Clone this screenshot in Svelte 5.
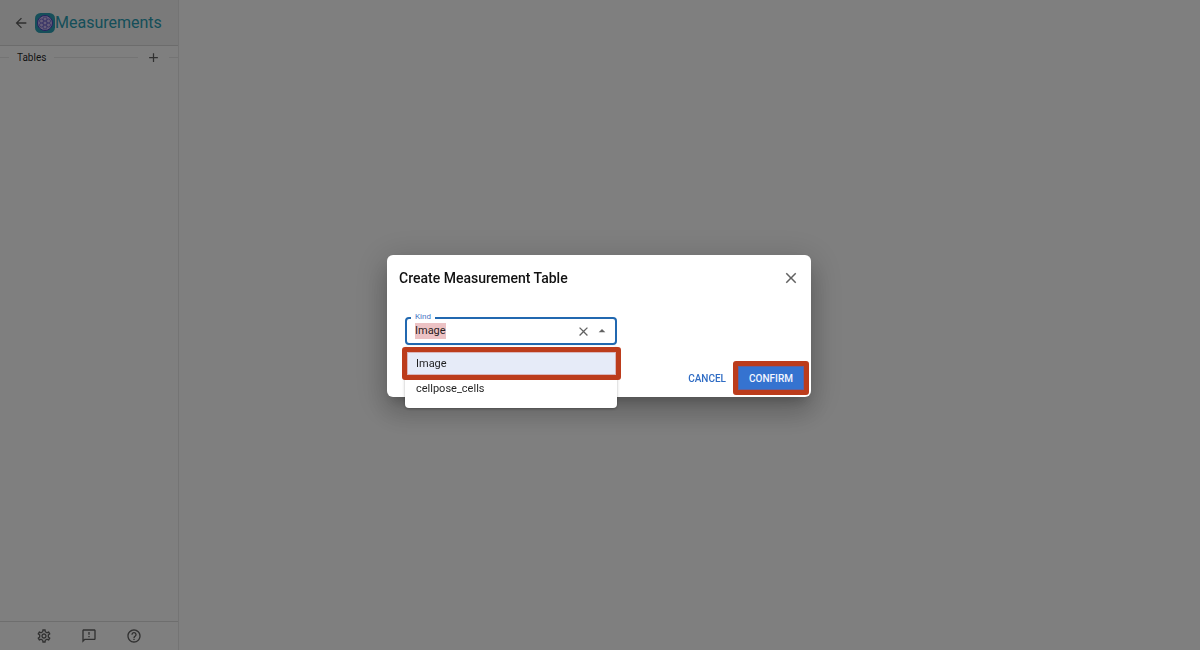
<script>
  import { onMount } from 'svelte';

  const kinds = ['Image', 'cellpose_cells'];
  let kind = $state('Image');
  let input;

  onMount(() => {
    input.focus();
    input.select();
  });
</script>

<div class="app">
  <aside class="sidebar">
    <header class="brand">
      <button class="icon-button" aria-label="Back">
        <svg width="16" height="16" viewBox="0 0 24 24"><path d="M20 11H7.830l5.590-5.590L12 4l-8 8 8 8 1.410-1.410L7.830 13H20v-2z" /></svg>
      </button>
      <svg class="logo" width="20" height="20" viewBox="0 0 40 40" aria-hidden="true">
        <rect width="40" height="40" rx="11" fill="#2c9fb4" />
        <circle cx="20" cy="20" r="15" fill="#cdbcf0" />
        <g fill="none" stroke="#7a6fd2" stroke-width="2">
          <circle cx="20" cy="20" r="15" stroke="#4c40c0" stroke-width="2" />
          <circle cx="20" cy="20" r="4" />
          <circle cx="20" cy="12" r="4" /><circle cx="20" cy="28" r="4" />
          <circle cx="13" cy="16" r="4" /><circle cx="27" cy="16" r="4" />
          <circle cx="13" cy="24" r="4" /><circle cx="27" cy="24" r="4" />
        </g>
      </svg>
      <h1>Measurements</h1>
    </header>
    <div class="section">
      <span class="rule short"></span>
      <span>Tables</span>
      <span class="rule"></span>
      <button class="icon-button" aria-label="Add table">
        <svg width="15" height="15" viewBox="0 0 24 24"><path d="M19 13h-6v6h-2v-6H5v-2h6V5h2v6h6v2z" /></svg>
      </button>
      <span class="rule short"></span>
    </div>
    <footer class="tools">
      <button class="icon-button" aria-label="Settings">
        <svg width="16" height="16" viewBox="0 0 24 24"><path d="M19.430 12.980c.04-.32.07-.64.07-.98 0-.34-.03-.66-.07-.98l2.110-1.650c.19-.15.24-.42.12-.64l-2-3.460c-.09-.16-.26-.25-.44-.25-.06 0-.12.010-.17.030l-2.490 1c-.52-.4-1.080-.73-1.690-.98l-.38-2.650C14.460 2.180 14.250 2 14 2h-4c-.25 0-.46.18-.49.42l-.38 2.650c-.61.25-1.170.59-1.690.98l-2.490-1c-.06-.02-.12-.03-.18-.03-.17 0-.34.090-.43.25l-2 3.460c-.13.22-.07.49.12.64l2.110 1.650c-.04.32-.07.65-.07.98 0 .33.030.66.070.98l-2.110 1.650c-.19.15-.24.42-.12.64l2 3.460c.09.16.26.25.44.25.06 0 .12-.01.17-.03l2.490-1c.52.4 1.080.73 1.690.98l.38 2.650c.03.24.24.42.49.42h4c.25 0 .46-.18.49-.42l.38-2.650c.61-.25 1.170-.59 1.690-.98l2.490 1c.06.020.12.030.18.030.17 0 .34-.09.43-.25l2-3.460c.12-.22.07-.49-.12-.64l-2.110-1.650zm-1.980-1.710c.04.31.05.52.05.73 0 .21-.02.43-.05.73l-.14 1.130.89.7 1.080.84-.7 1.210-1.270-.51-1.040-.42-.9.68c-.43.32-.84.56-1.250.73l-1.060.43-.16 1.130-.2 1.350h-1.400l-.19-1.350-.16-1.130-1.060-.43c-.43-.18-.83-.41-1.230-.71l-.91-.7-1.060.43-1.270.51-.7-1.210 1.080-.84.89-.7-.14-1.130c-.03-.31-.05-.54-.05-.74s.02-.43.05-.73l.14-1.130-.89-.7-1.080-.84.7-1.210 1.270.51 1.040.42.9-.68c.43-.32.84-.56 1.250-.73l1.060-.43.16-1.130.2-1.350h1.390l.19 1.350.16 1.130 1.060.43c.43.18.83.41 1.230.71l.91.7 1.060-.43 1.270-.51.7 1.210-1.070.85-.89.7.14 1.130zM12 8c-2.210 0-4 1.790-4 4s1.790 4 4 4 4-1.790 4-4-1.790-4-4-4zm0 6c-1.100 0-2-.9-2-2s.9-2 2-2 2 .9 2 2-.9 2-2 2z" /></svg>
      </button>
      <button class="icon-button" aria-label="Send feedback">
        <svg width="16" height="16" viewBox="0 0 24 24"><path d="M20 2H4c-1.100 0-2 .9-2 2v18l4-4h14c1.100 0 2-.9 2-2V4c0-1.100-.9-2-2-2zm0 14H5.170L4 17.170V4h16v12zM11 12h2v2h-2zm0-6h2v4h-2z" /></svg>
      </button>
      <button class="icon-button" aria-label="Help">
        <svg width="16" height="16" viewBox="0 0 24 24"><path d="M11 18h2v-2h-2v2zm1-16C6.480 2 2 6.480 2 12s4.480 10 10 10 10-4.480 10-10S17.520 2 12 2zm0 18c-4.410 0-8-3.590-8-8s3.590-8 8-8 8 3.590 8 8-3.590 8-8 8zm0-14c-2.210 0-4 1.790-4 4h2c0-1.100.9-2 2-2s2 .9 2 2c0 2-3 1.750-3 5h2c0-2.250 3-2.500 3-5 0-2.210-1.790-4-4-4z" /></svg>
      </button>
    </footer>
  </aside>
  <main></main>
</div>

<div class="backdrop">
  <div class="dialog" role="dialog" aria-modal="true" aria-labelledby="dialog-title">
    <div class="title-row">
      <h2 id="dialog-title">Create Measurement Table</h2>
      <button class="icon-button" aria-label="Close">
        <svg width="18" height="18" viewBox="0 0 24 24"><path d="M19 6.410L17.590 5 12 10.590 6.410 5 5 6.410 10.590 12 5 17.590 6.410 19 12 13.410 17.590 19 19 17.590 13.410 12z" /></svg>
      </button>
    </div>
    <div class="field">
      <label for="kind">Kind</label>
      <input id="kind" type="text" role="combobox" aria-expanded="true" aria-controls="kinds" autocomplete="off" spellcheck="false" bind:this={input} bind:value={kind} />
      <button class="icon-button" aria-label="Clear" onclick={() => (kind = '')}>
        <svg width="15" height="15" viewBox="0 0 24 24"><path d="M19 6.410L17.590 5 12 10.590 6.410 5 5 6.410 10.590 12 5 17.590 6.410 19 12 13.410 17.590 19 19 17.590 13.410 12z" /></svg>
      </button>
      <button class="icon-button" aria-label="Toggle options">
        <svg width="16" height="16" viewBox="0 0 24 24"><path d="M7 14l5-5 5 5z" /></svg>
      </button>
      <ul id="kinds" role="listbox">
        {#each kinds as item, i}
          <li role="option" aria-selected={i === 0} class:marked={i === 0}>{item}</li>
        {/each}
      </ul>
    </div>
    <div class="actions">
      <button class="text-button">Cancel</button>
      <button class="confirm marked">Confirm</button>
    </div>
  </div>
</div>

<style>
  :global(body) {
    font-family: Roboto, sans-serif;
    font-size: 11px;
    color: rgba(0, 0, 0, 0.87);
    background: #fff;
  }
  .app {
    display: flex;
    height: 100vh;
  }
  main {
    flex: 1;
  }
  button {
    font: inherit;
    border: 0;
    margin: 0;
    padding: 0;
    background: none;
    cursor: pointer;
  }
  .icon-button {
    display: flex;
    flex: none;
    color: rgba(0, 0, 0, 0.62);
  }
  .icon-button svg {
    fill: currentColor;
  }
  .sidebar {
    display: flex;
    flex-direction: column;
    box-sizing: border-box;
    width: 179px;
    border-right: 1px solid #e8e8e8;
  }
  .brand {
    display: flex;
    align-items: center;
    height: 45px;
    padding-left: 13px;
    background: #f4f4f4;
    border-bottom: 1px solid #d8d8d8;
  }
  .logo {
    flex: none;
    margin-left: 6px;
  }
  h1 {
    margin: 0;
    font-size: 16px;
    line-height: 20px;
    font-weight: 400;
    color: #2a9db2;
  }
  .section {
    display: flex;
    align-items: center;
    gap: 8px;
    height: 23px;
    font-size: 10px;
  }
  .rule {
    flex: 1;
    height: 1px;
    background: #e8e8e8;
  }
  .rule.short {
    flex: 0 0 9px;
  }
  .tools {
    display: flex;
    align-items: center;
    justify-content: center;
    gap: 29px;
    height: 28px;
    padding-right: 1px;
    margin-top: auto;
    border-top: 1px solid #dcdcdc;
  }
  .backdrop {
    position: fixed;
    inset: 0;
    display: flex;
    align-items: center;
    justify-content: center;
    padding: 2px 2px 0 0;
    background: rgba(0, 0, 0, 0.5);
  }
  .dialog {
    box-sizing: border-box;
    width: 424px;
    max-width: 90%;
    padding: 11px 7px 7px 12px;
    border-radius: 6px;
    background: #fff;
    box-shadow: 0 8px 12px -5px rgba(0, 0, 0, 0.2), 0 16px 26px 2px rgba(0, 0, 0, 0.14), 0 6px 32px 6px rgba(0, 0, 0, 0.14);
  }
  .title-row {
    display: flex;
    align-items: center;
    justify-content: space-between;
    height: 24px;
    padding-right: 4px;
  }
  h2 {
    margin: 0;
    font-size: 14px;
    font-weight: 500;
    color: #111;
  }
  .field {
    position: relative;
    display: flex;
    align-items: center;
    gap: 3px;
    box-sizing: border-box;
    width: 212px;
    height: 28px;
    margin: 27px 0 0 6px;
    padding: 0 5px 0 8px;
    border: 2px solid #2168b0;
    border-radius: 4px;
  }
  label {
    position: absolute;
    top: -8px;
    left: 4px;
    padding: 0 4px;
    font-size: 8px;
    line-height: 12px;
    color: #4675c4;
    background: #fff;
  }
  input {
    flex: 1;
    min-width: 0;
    height: 16px;
    padding: 0;
    border: 0;
    outline: 0;
    font: inherit;
    line-height: 16px;
    color: inherit;
    background: none;
  }
  input::selection {
    color: rgba(0, 0, 0, 0.87);
    background: #ecc2c4;
  }
  ul {
    position: absolute;
    z-index: 1;
    top: 27px;
    left: -2px;
    right: -2px;
    margin: 0;
    padding: 5px 0 7px;
    list-style: none;
    border-radius: 4px;
    background: #fff;
    box-shadow: 0 1px 3px rgba(0, 0, 0, 0.3);
  }
  li {
    padding: 0 11px;
    line-height: 25px;
  }
  li[aria-selected='true'] {
    background: #e6ebf8;
  }
  .marked {
    position: relative;
  }
  .marked::after {
    content: '';
    position: absolute;
    inset: -5px;
    border: 5px solid #bc3c1c;
    border-radius: 3px;
    box-shadow: inset 0 0 0 1px rgba(190, 60, 50, 0.3);
    pointer-events: none;
  }
  li.marked::after {
    inset: -4px -4px -4px -3px;
  }
  .actions {
    display: flex;
    justify-content: flex-end;
    gap: 12px;
    margin-top: 21px;
  }
  .actions button {
    height: 24px;
    font-size: 10px;
    font-weight: 500;
    text-transform: uppercase;
  }
  .text-button {
    color: #2f6cc4;
  }
  .actions .confirm {
    min-width: 66px;
    color: #f4f7ff;
    background: #3573d0;
  }
</style>
